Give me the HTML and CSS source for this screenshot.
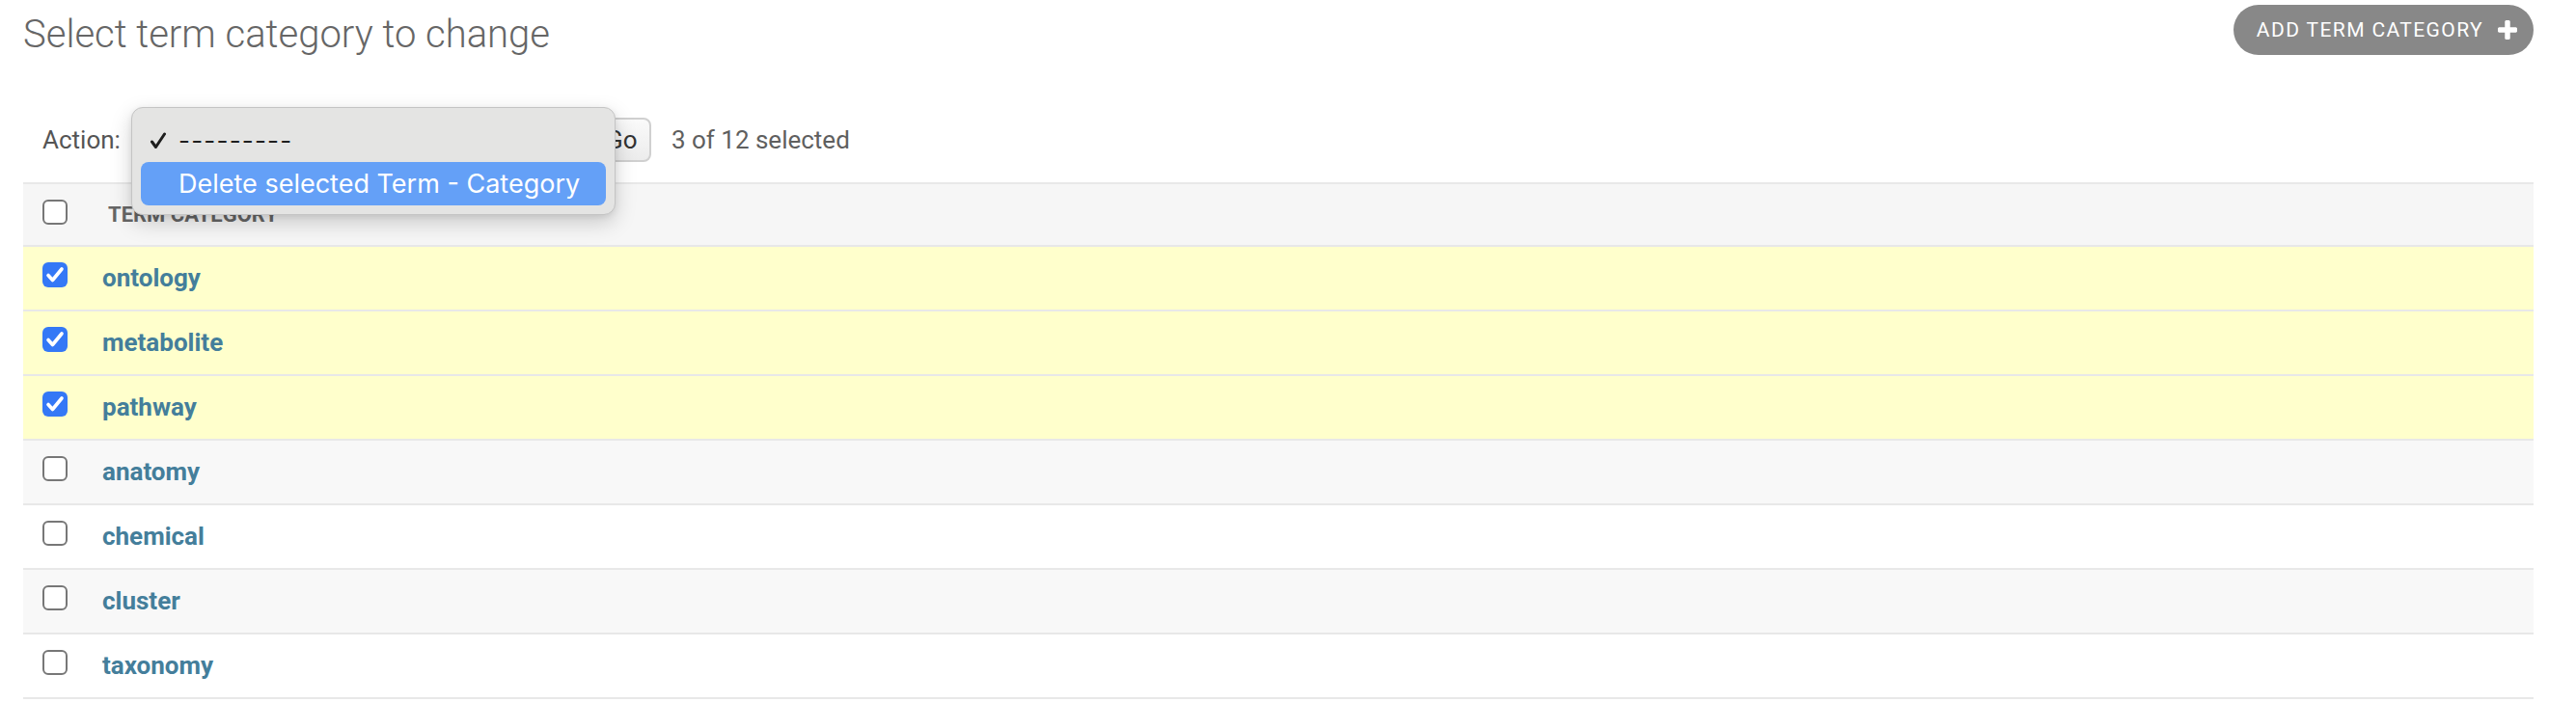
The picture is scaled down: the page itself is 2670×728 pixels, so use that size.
FILE: index.html
```html
<!DOCTYPE html>
<html lang="en">
<head>
<meta charset="utf-8">
<title>Select term category to change</title>
<link rel="stylesheet" href="styles.css">
</head>
<body>
<div class="page">
  <div class="top">
    <h1 class="title">Select term category to change</h1>
    <a class="addlink" href="#">
      <span class="addlink-text">Add term category</span>
      <svg class="plus" viewBox="192 128 1408 1408" width="20" height="20" aria-hidden="true"><path fill="#fff" d="M1600 736v192q0 40-28 68t-68 28h-416v416q0 40-28 68t-68 28h-192q-40 0-68-28t-28-68v-416h-416q-40 0-68-28t-28-68v-192q0-40 28-68t68-28h416v-416q0-40 28-68t68-28h192q40 0 68 28t28 68v416h416q40 0 68 28t28 68z"/></svg>
    </a>
  </div>

  <div class="actions">
    <span class="label">Action:</span>
    <span class="select"></span>
    <span class="go">Go</span>
    <span class="counter">3 of 12 selected</span>
  </div>

  <table class="result-list">
    <thead>
      <tr>
        <th class="col-check"><span class="cb"></span></th>
        <th class="col-text">Term category</th>
      </tr>
    </thead>
    <tbody>
      <tr class="selected">
        <td class="col-check"><span class="cb on"><svg viewBox="0 0 26 26" width="26" height="26"><path d="M6 13.5 L10.5 18.5 L20 7" fill="none" stroke="#fff" stroke-width="3.6" stroke-linecap="round" stroke-linejoin="round"/></svg></span></td>
        <td class="col-field"><a href="#">ontology</a></td>
      </tr>
      <tr class="selected">
        <td class="col-check"><span class="cb on"><svg viewBox="0 0 26 26" width="26" height="26"><path d="M6 13.5 L10.5 18.5 L20 7" fill="none" stroke="#fff" stroke-width="3.6" stroke-linecap="round" stroke-linejoin="round"/></svg></span></td>
        <td class="col-field"><a href="#">metabolite</a></td>
      </tr>
      <tr class="selected">
        <td class="col-check"><span class="cb on"><svg viewBox="0 0 26 26" width="26" height="26"><path d="M6 13.5 L10.5 18.5 L20 7" fill="none" stroke="#fff" stroke-width="3.6" stroke-linecap="round" stroke-linejoin="round"/></svg></span></td>
        <td class="col-field"><a href="#">pathway</a></td>
      </tr>
      <tr class="even">
        <td class="col-check"><span class="cb"></span></td>
        <td class="col-field"><a href="#">anatomy</a></td>
      </tr>
      <tr>
        <td class="col-check"><span class="cb"></span></td>
        <td class="col-field"><a href="#">chemical</a></td>
      </tr>
      <tr class="even">
        <td class="col-check"><span class="cb"></span></td>
        <td class="col-field"><a href="#">cluster</a></td>
      </tr>
      <tr>
        <td class="col-check"><span class="cb"></span></td>
        <td class="col-field"><a href="#">taxonomy</a></td>
      </tr>
    </tbody>
  </table>

  <div class="menu">
    <div class="menu-item">
      <span class="menu-check"><svg viewBox="0 0 18 18" width="18" height="18"><path d="M2.5 10 L6.5 15.5 L15.5 2" fill="none" stroke="#1e1e1e" stroke-width="3" stroke-linecap="round" stroke-linejoin="round"/></svg></span>
      <span class="menu-text dashes">---------</span>
    </div>
    <div class="menu-item active">
      <span class="menu-check"></span>
      <span class="menu-text">Delete selected Term - Category</span>
    </div>
  </div>
</div>
</body>
</html>
```

FILE: styles.css
```css
html, body {
  margin: 0;
  padding: 0;
  background: #fff;
}

body {
  font-family: Roboto, "Liberation Sans", Arial, sans-serif;
  color: #333;
}

.page {
  position: relative;
  padding: 0 44px 0 24px;
}

.top {
  display: flex;
  justify-content: space-between;
  align-items: flex-start;
  height: 57px;
}

.title {
  margin: 16px 0 0 0;
  font-size: 40px;
  line-height: 40px;
  font-weight: 300;
  color: #666;
}

.addlink {
  margin-top: 5px;
  display: flex;
  align-items: center;
  height: 52px;
  padding: 0 17px 0 24px;
  background: #888;
  border-radius: 26px;
  color: #fff;
  text-decoration: none;
  box-sizing: border-box;
}

.addlink-text {
  font-size: 21px;
  line-height: 24px;
  font-weight: 400;
  text-transform: uppercase;
  letter-spacing: 1.4px;
}

.plus {
  display: block;
  margin-left: 15px;
}

.actions {
  display: flex;
  align-items: center;
  height: 46px;
  margin-top: 65px;
  padding-left: 20px;
  font-size: 26px;
  line-height: 32px;
}

.label {
  color: #555;
}

.select {
  margin-left: 12px;
  width: 467px;
  height: 46px;
  box-sizing: border-box;
  border: 2px solid #ccc;
  border-radius: 8px;
  background: #fff;
}

.go {
  margin-left: 10px;
  width: 61px;
  height: 46px;
  box-sizing: border-box;
  border: 2px solid #d0d0d0;
  border-radius: 8px;
  background: linear-gradient(#fafafa, #ececec);
  color: #333;
  display: flex;
  align-items: center;
  justify-content: center;
}

.counter {
  margin-left: 21px;
  color: #5f5f5f;
}

.result-list {
  margin-top: 21px;
  width: 100%;
  border-collapse: separate;
  border-spacing: 0;
}

.result-list th {
  background: #f6f6f6;
  border-top: 2px solid #e8e8e8;
  border-bottom: 2px solid #e8e8e8;
  vertical-align: top;
  text-align: left;
  padding: 0;
}

.result-list th.col-check {
  width: 26px;
  padding: 16px 20px 0 20px;
  line-height: 0;
}

.result-list th.col-text {
  padding-left: 22px;
  font-size: 22px;
  line-height: 63px;
  font-weight: 700;
  color: #666;
  text-transform: uppercase;
}

.result-list td {
  border-bottom: 2px solid #e8e8e8;
  vertical-align: top;
  padding: 16px 16px 17px 16px;
  font-size: 26px;
  line-height: 32px;
  background: #fff;
}

.result-list tr.even td {
  background: #f8f8f8;
}

.result-list tr.selected td {
  background: #ffffcc;
}

.result-list td.col-check {
  width: 26px;
  padding-left: 20px;
  padding-right: 20px;
}

.col-field a {
  color: #447e9b;
  font-weight: 700;
  text-decoration: none;
}

.cb {
  display: block;
  width: 26px;
  height: 26px;
  box-sizing: border-box;
  border: 2px solid #777;
  border-radius: 6px;
  background: #fff;
}

.cb.on {
  border: none;
  background: #3478f6;
}

.cb svg {
  display: block;
}

.menu {
  position: absolute;
  left: 136px;
  top: 111px;
  width: 502px;
  height: 112px;
  box-sizing: border-box;
  padding: 11px 9px 9px 9px;
  background: #e4e4e3;
  border: 1px solid #c4c4c4;
  border-radius: 12px;
  box-shadow: 0 8px 22px rgba(0, 0, 0, 0.18), 0 2px 6px rgba(0, 0, 0, 0.08);
  font-family: Inter, "Noto Sans", sans-serif;
  font-size: 27px;
}

.menu-item {
  display: flex;
  align-items: center;
  height: 45px;
  padding-left: 9px;
  border-radius: 8px;
  color: #1e1e1e;
}

.menu-item.active {
  background: #64a0f7;
  color: #fff;
}

.menu-check {
  width: 30px;
  display: flex;
  align-items: center;
}

.menu-check svg {
  display: block;
}

.dashes {
  font-size: 26px;
  letter-spacing: 1.2px;
}
```
